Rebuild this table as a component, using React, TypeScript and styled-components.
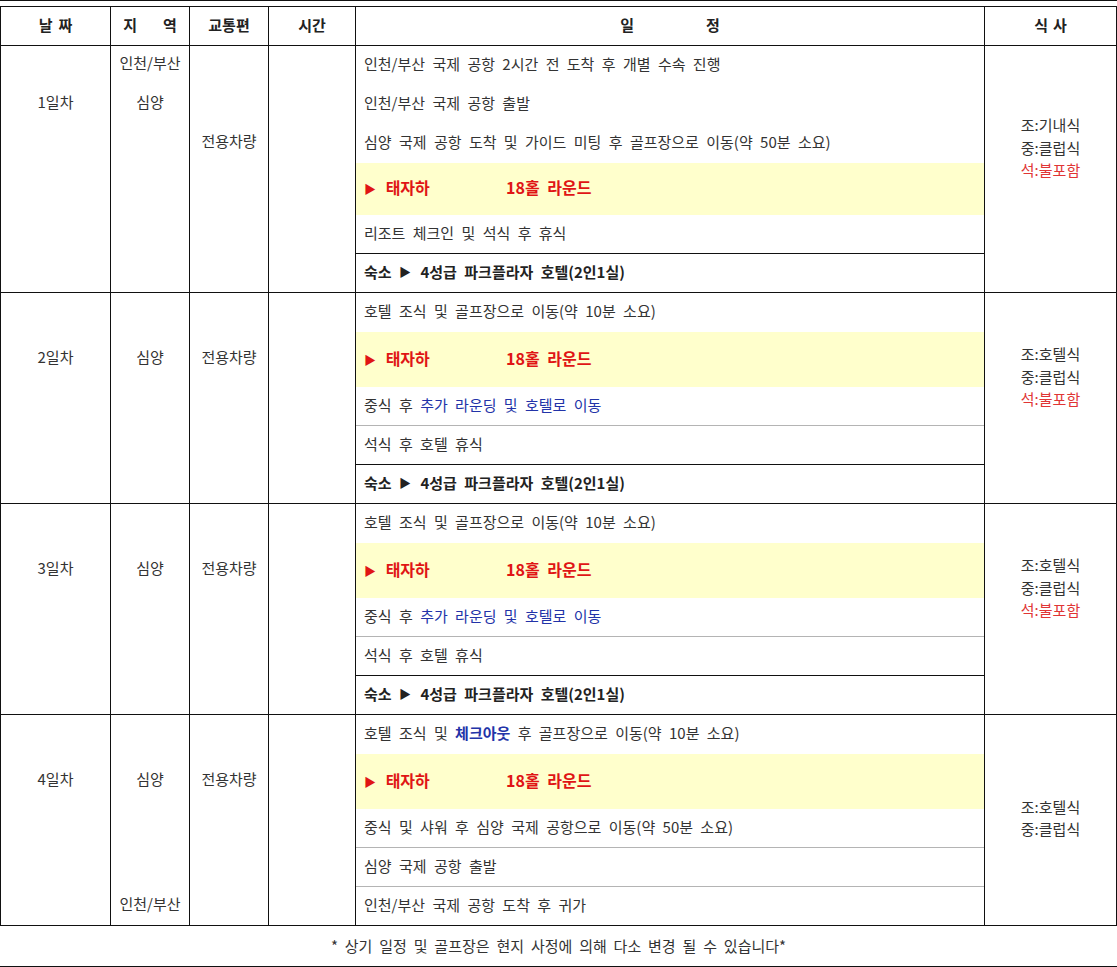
import React from 'react';
import styled, { createGlobalStyle } from 'styled-components';

const GlobalStyle = createGlobalStyle`
  html, body {
    margin: 0;
    padding: 0;
    background: #fff;
  }
  body {
    font-family: "Noto Sans CJK KR", "Noto Sans", sans-serif;
    font-size: 15px;
    color: #333;
  }
`;

const COLS = [110, 79, 79, 87, 629, 131];

const Page = styled.div`
  width: 1117px;
  border-top: 1px solid #111;
  padding-top: 5px;
`;

const Table = styled.div`
  width: 1117px;
  box-sizing: border-box;
  border-left: 1px solid #111;
  border-right: 1px solid #111;
`;

const HeadRow = styled.div`
  display: flex;
  height: 40px;
  box-sizing: border-box;
  border-top: 1px solid #111;
  border-bottom: 1px solid #111;
`;

const HeadCell = styled.div<{ $w: number; $last?: boolean; $gap: number }>`
  width: ${p => p.$w}px;
  flex: none;
  box-sizing: border-box;
  border-right: ${p => (p.$last ? 'none' : '1px solid #111')};
  display: flex;
  align-items: center;
  justify-content: center;
  gap: ${p => p.$gap}px;
  padding-bottom: 4px;
  font-weight: 700;
  font-size: 15px;
  color: #222;
`;

const DayBlock = styled.div`
  display: flex;
  border-bottom: 1px solid #111;
`;

const Column = styled.div<{ $w: number; $last?: boolean }>`
  width: ${p => p.$w}px;
  flex: none;
  box-sizing: border-box;
  border-right: ${p => (p.$last ? 'none' : '1px solid #111')};
  display: flex;
  flex-direction: column;
`;

const Slot = styled.div<{ $h: number }>`
  height: ${p => p.$h}px;
  box-sizing: border-box;
  padding-bottom: 4px;
  display: flex;
  flex-direction: column;
  align-items: center;
  justify-content: center;
  text-align: center;
  line-height: 22.5px;
`;

const ScheduleRow = styled.div<{ $h: number; $rule: 'none' | 'gray' | 'black'; $hl?: boolean; $bold?: boolean }>`
  height: ${p => p.$h}px;
  box-sizing: border-box;
  display: flex;
  align-items: center;
  padding: 0 0 4px 8px;
  background: ${p => (p.$hl ? '#ffffcc' : 'transparent')};
  font-weight: ${p => (p.$bold ? 700 : 400)};
  color: ${p => (p.$bold ? '#222' : '#333')};
  border-bottom: ${p =>
    p.$rule === 'black' ? '1px solid #111' : p.$rule === 'gray' ? '1px solid #b4b4b4' : 'none'};
  white-space: pre;
  word-spacing: 4px;
`;

const Arrow = styled.span`
  font-size: 12px;
  margin-right: 2px;
`;

const RoundName = styled.span`
  width: 142px;
  color: #e01515;
  font-weight: 700;
  font-size: 16px;
`;

const RoundInfo = styled.span`
  color: #e01515;
  font-weight: 700;
  font-size: 16px;
`;

const Blue = styled.span<{ $bold?: boolean }>`
  color: #2233a8;
  font-weight: ${p => (p.$bold ? 700 : 400)};
`;

const Meal = styled.div<{ $red?: boolean }>`
  color: ${p => (p.$red ? '#e03535' : '#333')};
`;

const Footer = styled.div`
  width: 1117px;
  height: 41px;
  box-sizing: border-box;
  border-bottom: 1px solid #111;
  padding-bottom: 2px;
  display: flex;
  align-items: center;
  justify-content: center;
  color: #333;
  word-spacing: 3.5px;
`;

type Seg = { span: number; content?: React.ReactNode };
type Sched = { text: React.ReactNode; kind?: 'round' | 'stay'; rule?: 'none' | 'gray' | 'black' };

interface Day {
  rows: number[];
  day: Seg[];
  region: Seg[];
  transport: Seg[];
  meals: Seg[];
  schedule: Sched[];
}

const round: Sched = {
  kind: 'round',
  text: (
    <>
      <RoundName>
        <Arrow>▶</Arrow> 태자하
      </RoundName>
      <RoundInfo>18홀 라운드</RoundInfo>
    </>
  ),
};

const stay: Sched = {
  kind: 'stay',
  text: (
    <>
      숙소 <Arrow>▶</Arrow> 4성급 파크플라자 호텔(2인1실)
    </>
  ),
};

const hotelMeals = (
  <>
    <Meal>조:호텔식</Meal>
    <Meal>중:클럽식</Meal>
    <Meal $red>석:불포함</Meal>
  </>
);

const midDay = (label: string): Day => ({
  rows: [39, 55, 39, 39, 38],
  day: [{ span: 1 }, { span: 1, content: label }, { span: 3 }],
  region: [{ span: 1 }, { span: 1, content: '심양' }, { span: 3 }],
  transport: [{ span: 1 }, { span: 1, content: '전용차량' }, { span: 3 }],
  meals: [{ span: 4, content: hotelMeals }, { span: 1 }],
  schedule: [
    { text: '호텔 조식 및 골프장으로 이동(약 10분 소요)' },
    round,
    { text: <>중식 후 <Blue>추가 라운딩 및 호텔로 이동</Blue></>, rule: 'gray' },
    { text: '석식 후 호텔 휴식', rule: 'black' },
    stay,
  ],
});

const days: Day[] = [
  {
    rows: [39, 39, 39, 52, 39, 38],
    day: [{ span: 1 }, { span: 1, content: '1일차' }, { span: 4 }],
    region: [{ span: 1, content: '인천/부산' }, { span: 1, content: '심양' }, { span: 4 }],
    transport: [{ span: 2 }, { span: 1, content: '전용차량' }, { span: 3 }],
    meals: [
      {
        span: 5,
        content: (
          <>
            <Meal>조:기내식</Meal>
            <Meal>중:클럽식</Meal>
            <Meal $red>석:불포함</Meal>
          </>
        ),
      },
      { span: 1 },
    ],
    schedule: [
      { text: '인천/부산 국제 공항 2시간 전 도착 후 개별 수속 진행' },
      { text: '인천/부산 국제 공항 출발' },
      { text: '심양 국제 공항 도착 및 가이드 미팅 후 골프장으로 이동(약 50분 소요)' },
      round,
      { text: '리조트 체크인 및 석식 후 휴식', rule: 'black' },
      stay,
    ],
  },
  midDay('2일차'),
  midDay('3일차'),
  {
    rows: [39, 55, 39, 39, 38],
    day: [{ span: 1 }, { span: 1, content: '4일차' }, { span: 3 }],
    region: [{ span: 1 }, { span: 1, content: '심양' }, { span: 2 }, { span: 1, content: '인천/부산' }],
    transport: [{ span: 1 }, { span: 1, content: '전용차량' }, { span: 3 }],
    meals: [
      {
        span: 5,
        content: (
          <>
            <Meal>조:호텔식</Meal>
            <Meal>중:클럽식</Meal>
          </>
        ),
      },
    ],
    schedule: [
      { text: <>호텔 조식 및 <Blue $bold>체크아웃</Blue> 후 골프장으로 이동(약 10분 소요)</> },
      round,
      { text: '중식 및 샤워 후 심양 국제 공항으로 이동(약 50분 소요)', rule: 'gray' },
      { text: '심양 국제 공항 출발', rule: 'gray' },
      { text: '인천/부산 국제 공항 도착 후 귀가' },
    ],
  },
];

const heads: { label: string[]; gap: number }[] = [
  { label: ['날', '짜'], gap: 6 },
  { label: ['지', '역'], gap: 26 },
  { label: ['교통편'], gap: 0 },
  { label: ['시간'], gap: 0 },
  { label: ['일', '정'], gap: 72 },
  { label: ['식', '사'], gap: 5 },
];

const SegColumn: React.FC<{ w: number; rows: number[]; segs: Seg[]; last?: boolean }> = ({ w, rows, segs, last }) => {
  let at = 0;
  return (
    <Column $w={w} $last={last}>
      {segs.map((s, i) => {
        const h = rows.slice(at, at + s.span).reduce((a, b) => a + b, 0);
        at += s.span;
        return (
          <Slot key={i} $h={h}>
            {s.content}
          </Slot>
        );
      })}
    </Column>
  );
};

const DayRows: React.FC<{ d: Day }> = ({ d }) => (
  <DayBlock>
    <SegColumn w={COLS[0]} rows={d.rows} segs={d.day} />
    <SegColumn w={COLS[1]} rows={d.rows} segs={d.region} />
    <SegColumn w={COLS[2]} rows={d.rows} segs={d.transport} />
    <SegColumn w={COLS[3]} rows={d.rows} segs={[{ span: d.rows.length }]} />
    <Column $w={COLS[4]}>
      {d.schedule.map((s, i) => (
        <ScheduleRow
          key={i}
          $h={d.rows[i]}
          $rule={s.rule ?? 'none'}
          $hl={s.kind === 'round'}
          $bold={s.kind === 'stay'}
        >
          {s.text}
        </ScheduleRow>
      ))}
    </Column>
    <SegColumn w={COLS[5]} rows={d.rows} segs={d.meals} last />
  </DayBlock>
);

const App: React.FC = () => (
  <>
    <GlobalStyle />
    <Page>
      <Table>
        <HeadRow>
          {heads.map((h, i) => (
            <HeadCell key={i} $w={COLS[i]} $gap={h.gap} $last={i === COLS.length - 1}>
              {h.label.map(l => (
                <span key={l}>{l}</span>
              ))}
            </HeadCell>
          ))}
        </HeadRow>
        {days.map((d, i) => (
          <DayRows key={i} d={d} />
        ))}
      </Table>
      <Footer>* 상기 일정 및 골프장은 현지 사정에 의해 다소 변경 될 수 있습니다*</Footer>
    </Page>
  </>
);

export default App;
